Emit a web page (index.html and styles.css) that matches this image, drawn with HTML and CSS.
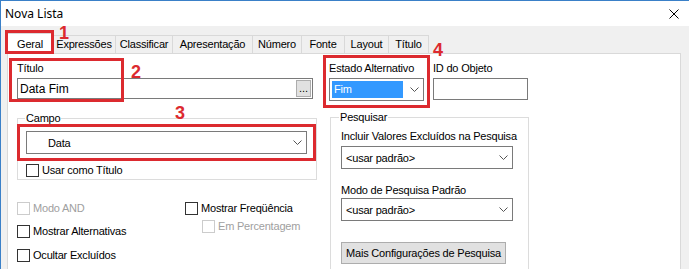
FILE: index.html
```html
<!DOCTYPE html>
<html lang="pt">
<head>
<meta charset="utf-8">
<title>Nova Lista</title>
<link rel="stylesheet" href="styles.css">
</head>
<body>
<div class="window">
  <div class="titlebar">
    <span class="title">Nova Lista</span>
    <svg class="close" viewBox="0 0 10 10" width="10" height="10"><path d="M0.5 0.5L9.5 9.5M9.5 0.5L0.5 9.5" stroke="#000" stroke-width="1" fill="none"/></svg>
  </div>
  <div class="tabs">
    <div class="tab active">Geral</div>
    <div class="tab">Expressões</div>
    <div class="tab">Classificar</div>
    <div class="tab">Apresentação</div>
    <div class="tab">Número</div>
    <div class="tab">Fonte</div>
    <div class="tab">Layout</div>
    <div class="tab">Título</div>
  </div>
  <div class="panel">
    <div class="col-left">
      <div class="label">Título</div>
      <div class="textbox">
        <span class="tb-text">Data Fim</span>
        <span class="dots">...</span>
      </div>
      <div class="group campo">
        <span class="legend">Campo</span>
        <div class="combo combo-campo"><span class="combo-text indent">Data</span><svg class="chev" viewBox="0 0 9 5" width="9" height="5"><path d="M0.5 0.5L4.5 4.5L8.5 0.5" stroke="#555" fill="none"/></svg></div>
        <div class="check"><span class="box"></span>Usar como Título</div>
      </div>
      <div class="options">
        <div class="opt-col opt-left">
          <div class="check disabled"><span class="box"></span>Modo AND</div>
          <div class="check"><span class="box"></span>Mostrar Alternativas</div>
          <div class="check last"><span class="box"></span>Ocultar Excluídos</div>
        </div>
        <div class="opt-col">
          <div class="check"><span class="box"></span>Mostrar Freqüência</div>
          <div class="check disabled sub"><span class="box"></span>Em Percentagem</div>
        </div>
      </div>
    </div>
    <div class="col-right">
      <div class="top-row">
        <div class="field">
          <div class="label">Estado Alternativo</div>
          <div class="combo combo-small"><span class="selected">Fim</span><svg class="chev" viewBox="0 0 9 5" width="9" height="5"><path d="M0.5 0.5L4.5 4.5L8.5 0.5" stroke="#555" fill="none"/></svg></div>
        </div>
        <div class="field">
          <div class="label">ID do Objeto</div>
          <div class="idbox"></div>
        </div>
      </div>
      <div class="group pesquisar">
        <span class="legend">Pesquisar</span>
        <div class="label first">Incluir Valores Excluídos na Pesquisa</div>
        <div class="combo combo-wide"><span class="combo-text">&lt;usar padrão&gt;</span><svg class="chev" viewBox="0 0 9 5" width="9" height="5"><path d="M0.5 0.5L4.5 4.5L8.5 0.5" stroke="#555" fill="none"/></svg></div>
        <div class="label second">Modo de Pesquisa Padrão</div>
        <div class="combo combo-wide"><span class="combo-text">&lt;usar padrão&gt;</span><svg class="chev" viewBox="0 0 9 5" width="9" height="5"><path d="M0.5 0.5L4.5 4.5L8.5 0.5" stroke="#555" fill="none"/></svg></div>
        <div class="button">Mais Configurações de Pesquisa</div>
      </div>
    </div>
  </div>

  <div class="mark mark1"></div>
  <div class="mark mark2"></div>
  <div class="mark mark3"></div>
  <div class="mark mark4"></div>
  <span class="num num1">1</span>
  <span class="num num2">2</span>
  <span class="num num3">3</span>
  <span class="num num4">4</span>
</div>
</body>
</html>
```
FILE: styles.css
```css
* { box-sizing: border-box; }
html, body { margin: 0; padding: 0; }
body {
  background: #f0f0f0;
  font-family: "Liberation Sans", Arial, sans-serif;
  font-size: 11px;
  letter-spacing: -0.2px;
  color: #000;
  overflow: hidden;
}
.window {
  position: relative;
  height: 269px;
  overflow: hidden;
  border-top: 1px solid #3a80c8;
  border-left: 1px solid #3a80c8;
  background: #f0f0f0;
  display: flex;
  flex-direction: column;
}
.titlebar {
  height: 25px;
  flex: none;
  background: #fff;
  display: flex;
  align-items: center;
  justify-content: space-between;
  padding: 0 10px 0 4px;
}
.title {
  font-family: "Noto Sans", "Open Sans", sans-serif;
  font-size: 12px;
  letter-spacing: 0;
}
.close { display: block; }

.tabs {
  display: grid;
  grid-template-columns: 46px 63px 57px 80px 49px 43px 44px 40px;
  align-items: end;
  margin: 7px 0 0 6px;
  width: max-content;
  flex: none;
  position: relative;
  z-index: 1;
}
.tab {
  height: 18px;
  border: 1px solid #d9d9d9;
  border-bottom: none;
  margin-left: -1px;
  display: flex;
  align-items: center;
  justify-content: center;
  line-height: 13px;
  white-space: nowrap;
}
.tab.active {
  height: 21px;
  margin-bottom: -1px;
  margin-left: 0;
  background: #fff;
}
.panel {
  flex: 1;
  margin: 0 8px 0 6px;
  background: #fff;
  border: 1px solid #d9d9d9;
  border-bottom: none;
  display: flex;
  gap: 12px;
  padding: 8px 0 0 9px;
}
.label { line-height: 13px; white-space: nowrap; }
.col-left { width: 300px; flex: none; }
.textbox {
  margin-top: 3px;
  width: 296px;
  height: 21px;
  border: 1px solid #7a7a7a;
  display: flex;
  align-items: center;
  justify-content: space-between;
  padding: 0 1px 0 2px;
  font-size: 12px;
  letter-spacing: 0;
}
.dots {
  width: 15px;
  height: 17px;
  background: #e1e1e1;
  border: 1px solid #adadad;
  font-size: 11px;
  line-height: 15px;
  text-align: center;
}
.group {
  border: 1px solid #dcdcdc;
}
.legend {
  display: table;
  line-height: 13px;
  margin-top: -7px;
  padding: 0 1px;
  margin-left: -1px;
  background: #fff;
}
.campo {
  margin-top: 19px;
  width: 300px;
  padding: 0 9px 1px 8px;
}
.combo {
  border: 1px solid #7a7a7a;
  background: #fff;
  height: 23px;
  display: flex;
  align-items: center;
  justify-content: space-between;
  padding: 0 4px 0 4px;
}
.combo-campo { margin-top: 6px; }
.combo-text.indent { padding-left: 17px; }
.chev { display: block; flex: none; }
.check {
  display: flex;
  align-items: center;
  gap: 3px;
  height: 15px;
  line-height: 13px;
  white-space: nowrap;
}
.campo .check { margin-top: 9px; }
.box {
  width: 13px;
  height: 13px;
  border: 1px solid #333;
  background: #fff;
  flex: none;
}
.check.disabled { color: #a0a0a0; }
.check.disabled .box { border-color: #cccccc; }
.options {
  display: flex;
  margin-top: 21px;
}
.opt-col { display: flex; flex-direction: column; }
.opt-left { width: 168px; gap: 8px; }
.opt-left .last { margin-top: 1px; }
.check.sub { margin: 3px 0 0 17px; }

.col-right { flex: none; }
.top-row { display: flex; gap: 9px; }
.field { width: 95px; }
.combo-small {
  margin-top: 3px;
  padding: 0 4px 0 2px;
}
.selected {
  width: 71px;
  height: 17px;
  background: #3399ff;
  color: #fff;
  line-height: 17px;
  padding-left: 2px;
}
.idbox {
  margin-top: 3px;
  height: 22px;
  border: 1px solid #7a7a7a;
  background: #fff;
}
.pesquisar {
  margin: 16px 0 0 1px;
  width: 199px;
  height: 170px;
  padding: 0 10px 0 10px;
}
.pesquisar .legend { margin-left: -2px; }
.pesquisar .first { margin-top: 6px; }
.pesquisar .second { margin-top: 15px; }
.combo-wide { width: 172px; margin-top: 3px; }
.pesquisar .second + .combo-wide { margin-top: 1px; }
.button {
  margin-top: 21px;
  width: 165px;
  height: 22px;
  border: 1px solid #adadad;
  background: #e1e1e1;
  display: flex;
  align-items: center;
  justify-content: center;
  white-space: nowrap;
}

.mark {
  position: absolute;
  border: 3px solid #dc2a2f;
  z-index: 5;
}
.mark1 { left: 4px; top: 29px; width: 49px; height: 24px; }
.mark2 { left: 8px; top: 57px; width: 115px; height: 44px; }
.mark3 { left: 16px; top: 123px; width: 299px; height: 37px; }
.mark4 { left: 322px; top: 54px; width: 107px; height: 53px; }
.num {
  position: absolute;
  z-index: 6;
  color: #dc2a2f;
  font-family: "Liberation Sans", Arial, sans-serif;
  font-weight: bold;
  font-size: 18px;
  line-height: 18px;
  letter-spacing: 0;
}
.num1 { left: 58px; top: 23px; }
.num2 { left: 130px; top: 62px; }
.num3 { left: 174px; top: 103px; }
.num4 { left: 432px; top: 40px; }
```
